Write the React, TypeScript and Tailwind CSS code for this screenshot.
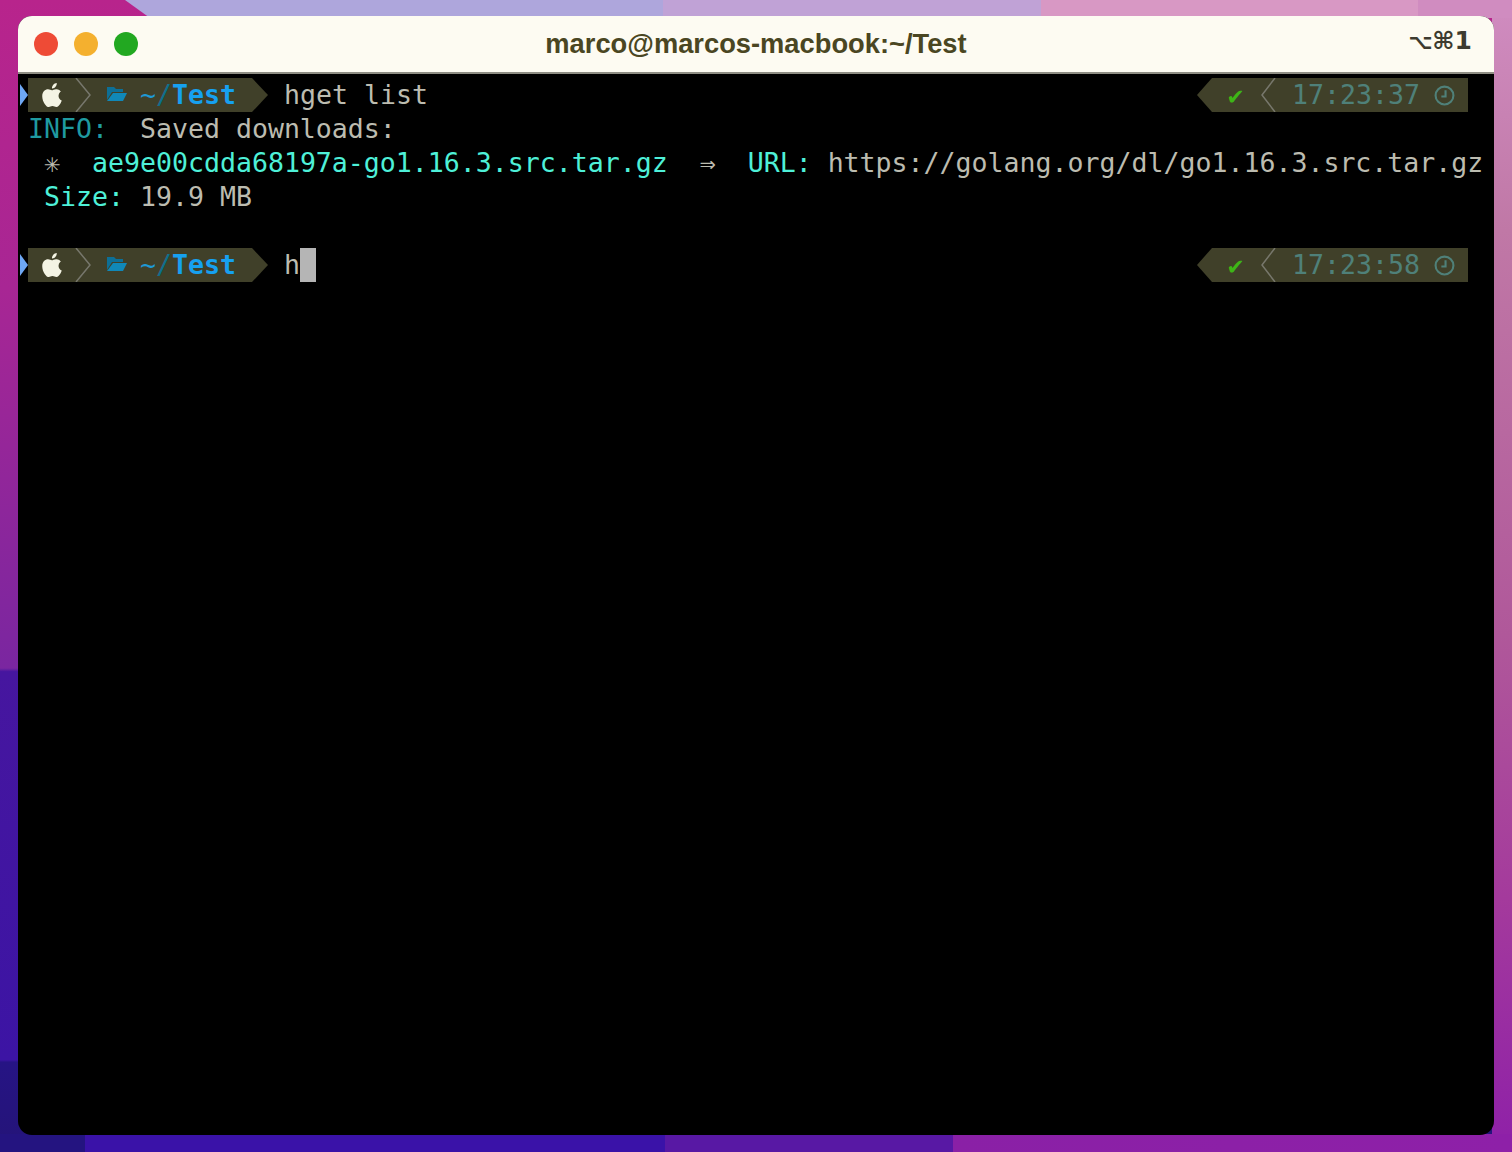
const mono = "font-['DejaVu_Sans_Mono','Liberation_Mono',monospace]";

function Apple() {
  return (
    <svg width="22" height="24" viewBox="0 0 814 1000" className="shrink-0">
      <path
        fill="#f4f4e4"
        d="M788 341c-6 4-108 62-108 190 0 149 131 201 135 203-1 3-21 72-69 142-43 62-88 124-156 124s-86-40-165-40c-77 0-104 41-166 41s-106-57-156-127C45 792 0 669 0 552c0-188 122-288 243-288 64 0 118 42 158 42 38 0 98-45 171-45 28 0 127 3 192 80zM554 159c30-36 52-86 52-135 0-7-1-14-2-20-49 2-108 33-143 74-28 32-54 82-54 133 0 8 1 15 2 18 3 1 8 1 13 1 44 0 100-30 132-71z"
      />
    </svg>
  );
}

function Folder() {
  return (
    <svg width="20" height="16" viewBox="0 0 20 16" className="shrink-0">
      <path fill="#0d6f96" d="M0 0h7l2 2h7v3H5L0 13z" />
      <path fill="#1088b8" d="M6 6h14l-4 8H0z" />
    </svg>
  );
}

function PromptLeft() {
  return (
    <div className="flex items-center h-[34px]">
      <div className="w-[10px] flex items-center justify-end">
        <div className="w-0 h-0 border-y-[11px] border-y-transparent border-l-[8px] border-l-[#6ea8f5]" />
      </div>
      <div className="flex items-center h-[34px] w-[224px] bg-[#404029]">
        <div className="ml-[13px]">
          <Apple />
        </div>
        <svg width="18" height="34" viewBox="0 0 18 34" className="ml-[11px] shrink-0">
          <path d="M2 0l14 17L2 34" fill="none" stroke="#77776c" strokeWidth="1.5" />
        </svg>
        <div className="ml-[15px]">
          <Folder />
        </div>
        <span className="ml-[13px] text-[#1e9ad6]">~</span>
        <span className="text-[#0f6f8c]">/</span>
        <span className="text-[#16a1f0] font-bold">Test</span>
      </div>
      <div className="w-0 h-0 border-y-[17px] border-y-transparent border-l-[16px] border-l-[#404029]" />
    </div>
  );
}

function PromptRight({ time }: { time: string }) {
  return (
    <div className="flex items-center h-[34px] mr-[26px]">
      <div className="w-0 h-0 border-y-[17px] border-y-transparent border-r-[15px] border-r-[#404029]" />
      <div className="flex items-center h-[34px] w-[256px] bg-[#404029]">
        <span className="ml-[16px] w-[16px] text-[#3eb516] text-[25px] leading-none">✔</span>
        <svg width="16" height="34" viewBox="0 0 16 34" className="ml-[17px] shrink-0">
          <path d="M14 0L1 17l13 17" fill="none" stroke="#77776c" strokeWidth="1.5" />
        </svg>
        <span className="ml-[15px] text-[#4f8079]">{time}</span>
        <svg width="21" height="21" viewBox="0 0 20 20" className="ml-[14px] shrink-0">
          <circle cx="10" cy="10" r="8.5" fill="none" stroke="#4f8079" strokeWidth="2" />
          <path d="M11 5v6H7" fill="none" stroke="#4f8079" strokeWidth="2" />
        </svg>
      </div>
    </div>
  );
}

export default function App() {
  return (
    <div className="relative w-[1512px] h-[1152px] overflow-hidden bg-[linear-gradient(180deg,#b8248c_0%,#a82694_25%,#7a26a0_58%,#46169f_58.3%,#3c14a4_92%,#261484_92.2%,#241478_100%)]">
      {/* wallpaper shards along the edges */}
      <div className="absolute right-0 top-0 bottom-0 w-[20px] bg-[linear-gradient(180deg,#d08cc0_0%,#c078a6_20%,#b0589a_55%,#a43a9c_78%,#8e20a8_100%)]" />
      <div className="absolute left-[125px] top-0 w-[920px] h-[18px] [clip-path:polygon(0_0,100%_0,100%_100%,25px_100%)] bg-[linear-gradient(90deg,#aea6dc_0%,#aea6dc_58.5%,#c0a2d6_58.5%,#c0a2d6_100%)]" />
      <div className="absolute left-[1041px] top-0 right-0 h-[18px] bg-[linear-gradient(90deg,#d898c4_0%,#d898c4_80%,#d08cc0_80%,#d08cc0_100%)]" />
      <div className="absolute left-0 right-0 bottom-0 h-[18px] bg-[linear-gradient(90deg,#241480_0%,#241480_5.6%,#3a12a8_5.6%,#3a12a8_44%,#5818a4_44%,#5818a4_63%,#8a20a6_63%,#8e20a8_100%)]" />

      <div className="absolute left-[18px] top-[16px] w-[1476px] h-[1119px] rounded-[14px] overflow-hidden bg-black flex flex-col">
        <div className="relative flex items-center h-[58px] shrink-0 bg-[#fdfbf2] border-b-2 border-[#8f8e84]">
          <div className="flex gap-[16px] ml-[16px]">
            <div className="w-[24px] h-[24px] rounded-full bg-[#ee4b36]" />
            <div className="w-[24px] h-[24px] rounded-full bg-[#f4b02f]" />
            <div className="w-[24px] h-[24px] rounded-full bg-[#22a821]" />
          </div>
          <div className="absolute inset-x-0 top-[8px] text-center text-[27.3px] font-bold text-[#4a4622] font-['Liberation_Sans',sans-serif]">
            marco@marcos-macbook:~/Test
          </div>
          <div className="absolute right-[22px] top-[6px] flex items-baseline font-bold text-[#3d3b30] font-['DejaVu_Sans',sans-serif]">
            <span className="text-[21px]">⌥</span>
            <span className="text-[24px]">⌘</span>
            <span className="text-[25px]">1</span>
          </div>
        </div>

        <div className={`${mono} text-[26.57px] leading-[34px] text-[#bcbcb0] pt-[4px] whitespace-pre`}>
          <div className="flex items-center justify-between">
            <div className="flex items-center">
              <PromptLeft />
              <span className="ml-[16px]">hget list</span>
            </div>
            <PromptRight time="17:23:37" />
          </div>
          <div className="pl-[10px]">
            <span className="text-[#1f9aa0]">INFO:</span>  Saved downloads:
          </div>
          <div className="pl-[10px]">
            {" "}<span className="text-[#bcbcb0]">✳</span>{"  "}
            <span className="text-[#4ef0d8]">ae9e00cdda68197a-go1.16.3.src.tar.gz</span>
            {"  ⇒  "}
            <span className="text-[#4ef0d8]">URL:</span> https://golang.org/dl/go1.16.3.src.tar.gz
          </div>
          <div className="pl-[10px]">
            {" "}<span className="text-[#4ef0d8]">Size:</span> 19.9 MB
          </div>
          <div className="h-[34px]" />
          <div className="flex items-center justify-between">
            <div className="flex items-center">
              <PromptLeft />
              <span className="ml-[16px]">h</span>
              <span className="w-[16px] h-[34px] bg-[#b5b5b5]" />
            </div>
            <PromptRight time="17:23:58" />
          </div>
        </div>
      </div>
    </div>
  );
}
